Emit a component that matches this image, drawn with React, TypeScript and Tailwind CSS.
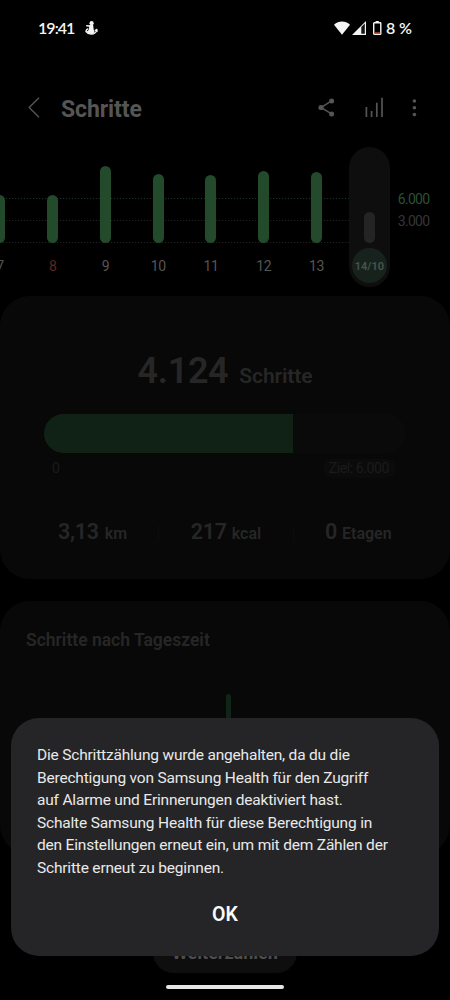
const days = [
  { label: "7", height: 47.5, tone: "text-[#555555]" },
  { label: "8", height: 48, tone: "text-[#5c2722]" },
  { label: "9", height: 76.5, tone: "text-[#555555]" },
  { label: "10", height: 68.5, tone: "text-[#555555]" },
  { label: "11", height: 68, tone: "text-[#555555]" },
  { label: "12", height: 71.7, tone: "text-[#555555]" },
  { label: "13", height: 70.2, tone: "text-[#555555]" },
];

const message = [
  "Die Schrittzählung wurde angehalten, da du die",
  "Berechtigung von Samsung Health für den Zugriff",
  "auf Alarme und Erinnerungen deaktiviert hast.",
  "Schalte Samsung Health für diese Berechtigung in",
  "den Einstellungen erneut ein, um mit dem Zählen der",
  "Schritte erneut zu beginnen.",
];

function StatusBar() {
  return (
    <div className="flex h-14 shrink-0 items-center pl-[38px] pr-[38px] text-[#f4f4f4]">
      <span className="w-[35px] whitespace-nowrap font-[Lato,sans-serif] text-[16px] font-semibold leading-5 tracking-[-0.95px]">19:41</span>
      <svg className="ml-3 h-[14px] w-[13px]" viewBox="0 0 13 14" fill="currentColor">
        <circle cx="6.6" cy="2.2" r="2.1" />
        <path d="M4.2 4.2 8.1 3.8 8.7 8.5 9.6 11 8 13 3 12.6 2 10.5 4 8.5Z" />
        <path d="M4.5 5 1.7 4.8M2.9 8C.8 8.6.7 10 2.2 11.1M1 10.6c2.3 3.2 8.8 3.8 10.9-1.4M10.3 9.3l1.4-.8.5 1.6" fill="none" stroke="currentColor" strokeWidth="1.4" strokeLinecap="round" />
      </svg>
      <svg className="ml-auto h-[14px] w-[16px]" viewBox="0 0 16 14" fill="currentColor">
        <path d="M0 3.7C4.6-.5 11.4-.5 16 3.7L8 13.7Z" />
      </svg>
      <svg className="ml-[2px] h-[14px] w-[14px]" viewBox="0 0 14 14">
        <path d="M0 14 14 0v14Z" fill="currentColor" />
        <path d="M9.3 6.1 12.8 2.6v10.1H9.3Z" fill="#161616" />
      </svg>
      <svg className="ml-[7px] h-[14px] w-[9px]" viewBox="0 0 9 14">
        <path d="M2.6 0h3.2v1.6H2.6z" fill="currentColor" />
        <rect x=".7" y="1.7" width="7.1" height="11.6" rx=".6" fill="none" stroke="currentColor" strokeWidth="1.4" />
        <path d="M1.2 11.3h6.1v1.4H1.2z" fill="#c9492f" />
      </svg>
      <span className="ml-[4px] w-[26px] whitespace-nowrap font-[Lato,sans-serif] text-[16px] font-semibold leading-5 tracking-[-0.1px]">8 %</span>
    </div>
  );
}

function Header() {
  return (
    <header className="flex h-[91px] shrink-0 pt-[38px] text-[#555555]">
      <svg className="ml-[28px] mt-[3px] h-[21px] w-[12px]" viewBox="0 0 12 21" fill="none" stroke="currentColor" strokeWidth="1.4">
        <path d="M11 .8 1.2 10.5 11 20.2" />
      </svg>
      <h1 className="ml-[21px] mt-px text-[23px] font-bold leading-[30px] tracking-[-0.1px]">Schritte</h1>
      <svg className="ml-auto mt-[4px] h-[19px] w-[17px]" viewBox="0 0 17 19" fill="currentColor">
        <path d="M13.5 2.9 3 9.5l10.5 6.4" fill="none" stroke="currentColor" strokeWidth="1.5" />
        <circle cx="13.6" cy="2.9" r="2.5" />
        <circle cx="3" cy="9.5" r="2.6" />
        <circle cx="13.6" cy="16" r="2.5" />
      </svg>
      <svg className="ml-[30px] mt-[3px] h-[21px] w-[19px]" viewBox="0 0 19 21" fill="none" stroke="currentColor" strokeWidth="1.7">
        <path d="M1.4 10v10M6.6 14v6M11.8 5.7V20M17 .7V20" />
      </svg>
      <svg className="ml-[28px] mr-[33px] mt-[5px] h-[19px] w-[5px]" viewBox="0 0 5 19" fill="currentColor">
        <circle cx="2.4" cy="2" r="1.8" />
        <circle cx="2.4" cy="8.8" r="1.8" />
        <circle cx="2.4" cy="15.6" r="1.8" />
      </svg>
    </header>
  );
}

function WeekChart() {
  return (
    <section className="relative flex h-[140px] shrink-0 overflow-hidden">
      <svg className="absolute left-0 top-0 h-[140px] w-[349px]" viewBox="0 0 349 140" fill="none" strokeWidth="1" strokeDasharray="1.2 1.8">
        <path d="M0 51.5H349" stroke="#1c3426" />
        <path d="M0 73.5H349M0 95.5H349" stroke="#222222" />
      </svg>
      <div className="relative -ml-[26.4px] flex shrink-0">
        {days.map((d) => (
          <div key={d.label} className="flex w-[52.75px] flex-col items-center">
            <div className="flex h-[95.5px] items-end">
              <div className="w-[11px] rounded-full bg-[#224a2b]" style={{ height: d.height }} />
            </div>
            <span className={`mt-[13.5px] text-[14px] leading-5 tracking-[-0.5px] ${d.tone}`}>{d.label}</span>
          </div>
        ))}
      </div>
      <div className="relative ml-[6px] flex w-[41px] shrink-0 flex-col items-center rounded-full bg-[#0e0e0e]">
        <div className="flex h-[95.5px] items-end">
          <div className="h-[30.5px] w-[11px] rounded-full bg-[#242424]" />
        </div>
        <div className="mt-[5.5px] flex size-[35px] items-center justify-center rounded-full bg-[#17221d] pt-[2px]">
          <span className="text-[11px] font-semibold leading-4 text-[#46564d]">14/10</span>
        </div>
      </div>
      <div className="ml-[8px] pt-[41px] text-[14px] leading-[22px] tracking-[-0.75px]">
        <div className="text-[#2b5135]">6.000</div>
        <div className="text-[#363636]">3.000</div>
      </div>
    </section>
  );
}

function StepsCard() {
  return (
    <section className="mt-[9px] flex h-[283px] shrink-0 flex-col rounded-[30px] bg-[#080808] px-[44px] text-[#262626]">
      <div className="mt-[52px] flex h-[46px] items-baseline justify-center whitespace-nowrap font-semibold leading-[46px]">
        <span className="text-[36px] tracking-[-0.35px]">4.124</span>
        <span className="ml-[11px] text-[21px] tracking-[-0.1px]">Schritte</span>
      </div>
      <div className="mt-[20px] h-[39px] w-[362px] overflow-hidden rounded-full bg-[#0a0a0a]">
        <div className="h-full w-[249px] bg-[#102116]" />
      </div>
      <div className="mt-[5px] flex h-[20px] items-center justify-between pl-[8px] pr-[10px] text-[14px] tracking-[-0.4px] text-[#1b1b1b]">
        <span>0</span>
        <span className="rounded-full bg-[#0b0b0b] pl-[6px] pr-[7px] leading-[19px]">Ziel: 6.000</span>
      </div>
      <div className="mt-[39px] flex items-center whitespace-nowrap font-semibold leading-[30px]">
        <div className="flex w-[114px] items-baseline pl-[14px]">
          <span className="text-[21.5px] tracking-[-0.3px]">3,13</span>
          <span className="ml-[6px] text-[16px]">km</span>
        </div>
        <div className="h-4 w-px bg-[#0c0c0c]" />
        <div className="flex w-[134px] items-baseline justify-center">
          <span className="text-[21.5px] tracking-[-0.3px]">217</span>
          <span className="ml-[5px] text-[16px]">kcal</span>
        </div>
        <div className="h-4 w-px bg-[#0c0c0c]" />
        <div className="flex items-baseline pl-[31px]">
          <span className="text-[21.5px] tracking-[-0.3px]">0</span>
          <span className="ml-[5px] text-[16px]">Etagen</span>
        </div>
      </div>
    </section>
  );
}

function DaytimeCard() {
  return (
    <section className="mt-[22px] flex h-[254px] shrink-0 flex-col rounded-[30px] bg-[#080808]">
      <h2 className="pl-[26px] pt-[27px] text-[17.5px] font-semibold leading-6 text-[#262626]">Schritte nach Tageszeit</h2>
      <div className="ml-[226px] mt-[42px] h-[120px] w-[5px] rounded-full bg-[#0f2517]" />
    </section>
  );
}

function Dialog() {
  return (
    <div role="dialog" className="absolute inset-x-[11px] top-[718px] flex h-[238px] flex-col rounded-[28px] bg-[#252527] px-[26px] pt-[26px]">
      <p className="whitespace-nowrap text-[15.5px] leading-[22.5px] tracking-[-0.19px] text-[#e9e9e9]">
        {message.map((line) => (
          <span key={line} className="block">{line}</span>
        ))}
      </p>
      <button className="mt-[21px] self-center text-[19.5px] font-semibold leading-[30px] text-[#fafafa]">OK</button>
    </div>
  );
}

export default function App() {
  return (
    <main className="relative flex h-[1000px] w-[450px] flex-col overflow-hidden bg-black font-[Roboto,sans-serif]">
      <StatusBar />
      <Header />
      <WeekChart />
      <StepsCard />
      <DaytimeCard />
      <button className="mt-[77px] h-[41px] w-[144px] shrink-0 self-center rounded-full bg-[#0e0e0e] text-[18px] font-bold leading-[41px] text-[#4e4e4e]">Weiterzählen</button>
      <div className="mt-[12px] h-[4px] w-[118px] shrink-0 self-center rounded-full bg-[#e6e6e6]" />
      <Dialog />
    </main>
  );
}
